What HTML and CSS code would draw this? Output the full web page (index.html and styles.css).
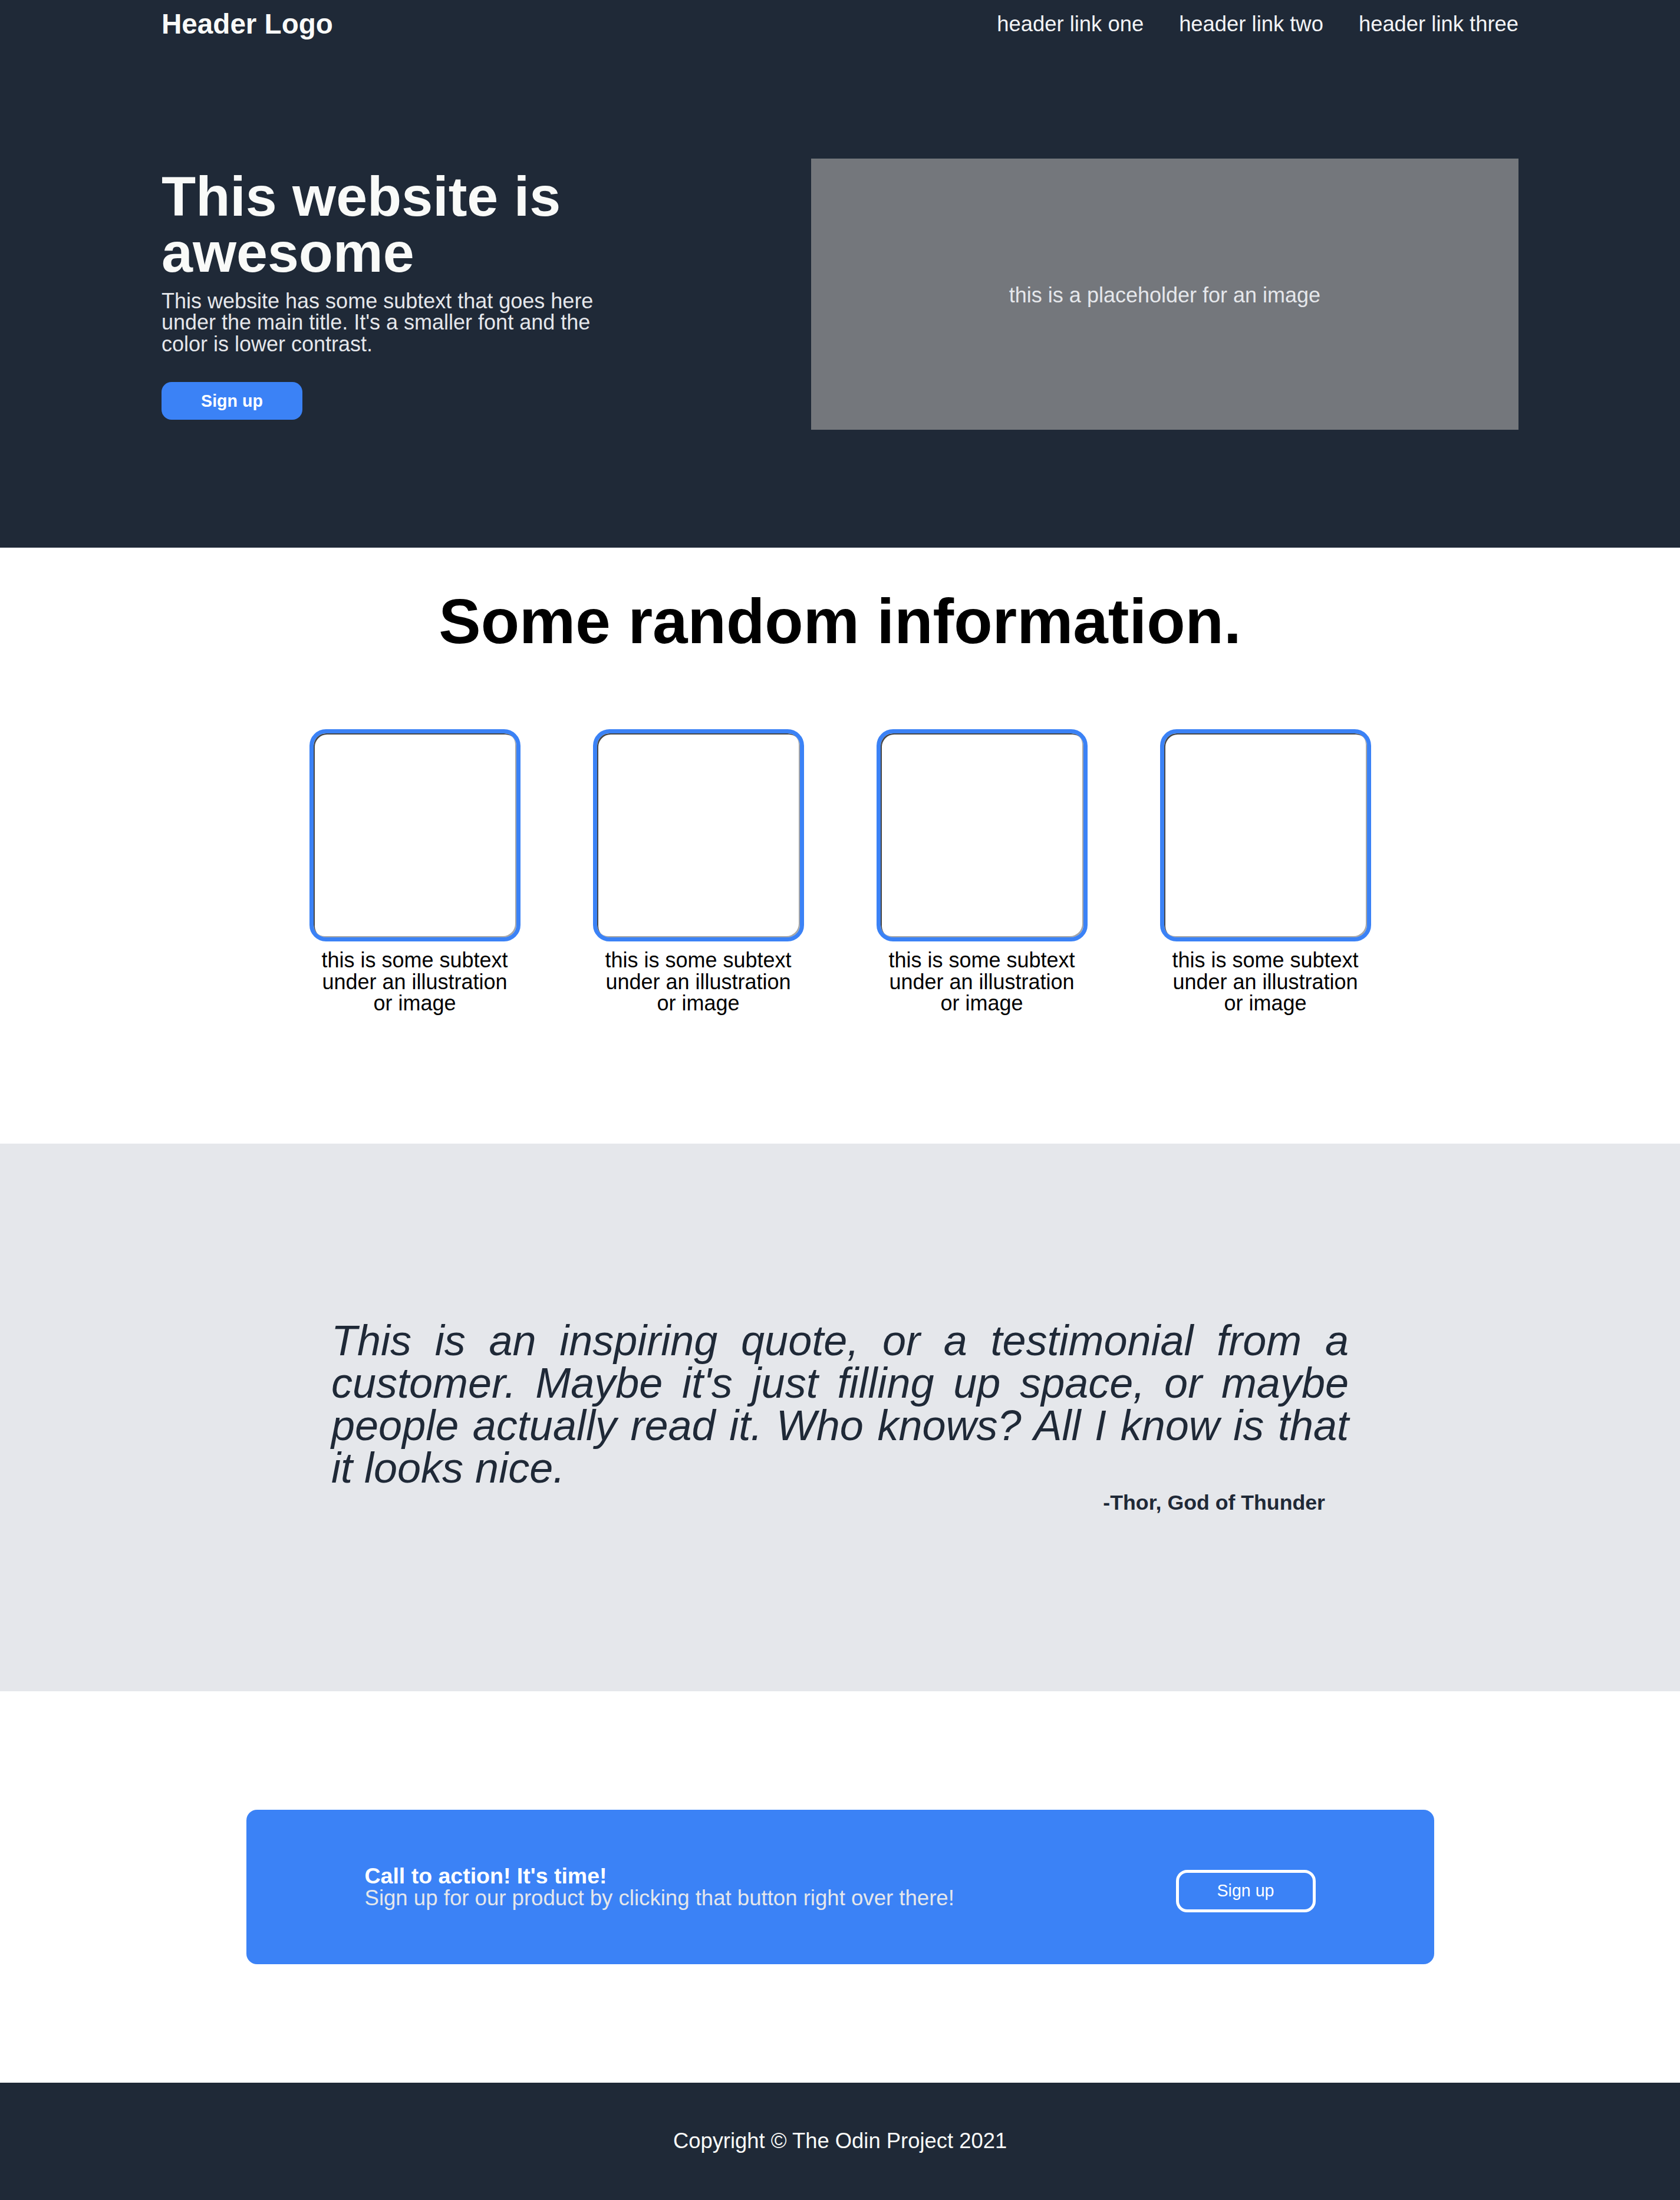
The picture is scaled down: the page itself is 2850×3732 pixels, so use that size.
FILE: index.html
```html
<!DOCTYPE html>
<html lang="en">
<head>
<meta charset="utf-8">
<title>Landing Page</title>
<link rel="stylesheet" href="styles.css">
</head>
<body>
<header class="hero">
  <div class="container">
    <nav class="nav">
      <div class="logo">Header Logo</div>
      <ul class="links">
        <li><a href="#">header link one</a></li>
        <li><a href="#">header link two</a></li>
        <li><a href="#">header link three</a></li>
      </ul>
    </nav>
    <div class="hero-body">
      <div class="hero-text">
        <h1 class="hero-title">This website is awesome</h1>
        <p class="hero-sub">This website has some subtext that goes here under the main title. It's a smaller font and the color is lower contrast.</p>
        <button class="btn-primary">Sign up</button>
      </div>
      <div class="hero-image">this is a placeholder for an image</div>
    </div>
  </div>
</header>

<section class="info">
  <h2 class="info-title">Some random information.</h2>
  <div class="cards">
    <div class="card">
      <div class="card-img"></div>
      <p class="card-text">this is some subtext under an illustration or image</p>
    </div>
    <div class="card">
      <div class="card-img"></div>
      <p class="card-text">this is some subtext under an illustration or image</p>
    </div>
    <div class="card">
      <div class="card-img"></div>
      <p class="card-text">this is some subtext under an illustration or image</p>
    </div>
    <div class="card">
      <div class="card-img"></div>
      <p class="card-text">this is some subtext under an illustration or image</p>
    </div>
  </div>
</section>

<section class="quote-section">
  <div class="quote-wrap">
    <p class="quote">This is an inspiring quote, or a testimonial from a customer. Maybe it's just filling up space, or maybe people actually read it. Who knows? All I know is that it looks nice.</p>
    <p class="author">-Thor, God of Thunder</p>
  </div>
</section>

<section class="cta-section">
  <div class="cta">
    <div class="cta-text">
      <p class="cta-title">Call to action! It's time!</p>
      <p class="cta-sub">Sign up for our product by clicking that button right over there!</p>
    </div>
    <button class="btn-outline">Sign up</button>
  </div>
</section>

<footer class="footer">Copyright © The Odin Project 2021</footer>
</body>
</html>
```

FILE: styles.css
```css
* { box-sizing: border-box; }

html, body {
  margin: 0;
  padding: 0;
}

body {
  font-family: "Liberation Sans", Arial, Helvetica, sans-serif;
  background: #ffffff;
  color: #000;
}

p, h1, h2, ul { margin: 0; padding: 0; }

.hero {
  background: #1f2937;
  height: 929px;
}

.container {
  width: 2302px;
  margin: 0 auto;
}

.nav {
  height: 69px;
  padding-top: 12px;
  display: flex;
  align-items: center;
  justify-content: space-between;
}

.logo {
  color: #f9faf8;
  font-size: 47.6px;
  font-weight: bold;
}

.links {
  list-style: none;
  display: flex;
  gap: 60px;
}

.links a {
  color: #f3f4f6;
  text-decoration: none;
  font-size: 36.4px;
}

.hero-body {
  display: flex;
  justify-content: space-between;
  align-items: center;
  padding: 200px 0;
}

.hero-text {
  width: 760px;
  display: flex;
  flex-direction: column;
  align-items: flex-start;
}

.hero-title {
  color: #f9faf8;
  font-size: 95.2px;
  font-weight: bold;
  line-height: 95px;
}

.hero-sub {
  color: #e5e7eb;
  font-size: 36px;
  line-height: 36.5px;
  margin-top: 17px;
}

.btn-primary {
  margin-top: 46px;
  width: 239px;
  height: 64px;
  border: none;
  border-radius: 17px;
  background: #3b82f6;
  color: #ffffff;
  font-family: "Liberation Sans", Arial, sans-serif;
  font-size: 28.6px;
  font-weight: bold;
}

.hero-image {
  width: 1200px;
  height: 460px;
  background: #74777c;
  color: #e5e7eb;
  font-size: 36px;
  display: flex;
  align-items: center;
  justify-content: center;
  padding-top: 4px;
}

.info {
  padding: 64px 0 219px;
  display: flex;
  flex-direction: column;
  align-items: center;
}

.info-title {
  font-size: 107px;
  font-weight: bold;
  line-height: 123px;
  color: #000;
}

.cards {
  margin-top: 121px;
  display: flex;
  gap: 123px;
}

.card {
  width: 358px;
  display: flex;
  flex-direction: column;
  align-items: center;
}

.card-img {
  width: 358px;
  height: 360px;
  border: 7px solid #3b82f6;
  border-radius: 28px;
  box-shadow: inset 2px 2px 0 #474747, inset -2px -2px 0 #a6a6a6;
}

.card-text {
  width: 340px;
  text-align: center;
  font-size: 36px;
  line-height: 36.5px;
  margin-top: 14px;
  color: #000;
}

.quote-section {
  background: #e5e7eb;
  height: 929px;
  display: flex;
  align-items: center;
  justify-content: center;
}

.quote-wrap {
  width: 1726px;
  display: flex;
  flex-direction: column;
}

.quote {
  font-size: 72px;
  line-height: 72px;
  font-style: italic;
  font-weight: 300;
  text-align: justify;
  color: #1f2937;
}

.author {
  align-self: flex-end;
  margin-right: 40px;
  margin-top: 3px;
  font-size: 35.7px;
  font-weight: bold;
  color: #1f2937;
}

.cta-section {
  padding: 201px 0;
  display: flex;
  justify-content: center;
}

.cta {
  width: 2015px;
  height: 262px;
  background: #3b82f6;
  border-radius: 18px;
  padding: 0 201px;
  display: flex;
  align-items: center;
  justify-content: space-between;
}

.cta-title {
  color: #ffffff;
  font-size: 37.5px;
  font-weight: bold;
  line-height: 37px;
}

.cta-sub {
  color: #e5e7eb;
  font-size: 36.6px;
  line-height: 37px;
}

.btn-outline {
  width: 237px;
  height: 72px;
  margin-top: 14px;
  background: transparent;
  border: 5px solid #ffffff;
  border-radius: 19px;
  color: #ffffff;
  font-family: "Liberation Sans", Arial, sans-serif;
  font-size: 28.6px;
}

.footer {
  background: #1f2937;
  height: 199px;
  display: flex;
  align-items: center;
  justify-content: center;
  color: #f9faf8;
  font-size: 36.4px;
}
```
